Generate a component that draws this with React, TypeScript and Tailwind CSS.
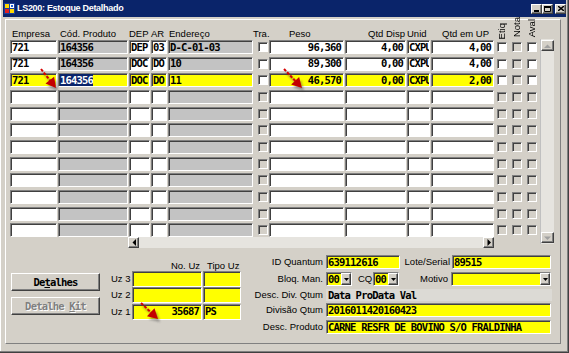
import React from 'react';

// classic win32 look: sunken edit fields, raised buttons
const MONO = "font-['DejaVu_Sans_Mono','Liberation_Mono',monospace] font-bold text-[10.5px] tracking-[-0.8px]";
const SUNKEN = 'border border-t-[#808080] border-l-[#808080] border-b-white border-r-white shadow-[inset_1px_1px_0_#404040]';
const RAISED = 'border border-t-white border-l-white border-b-[#404040] border-r-[#404040] shadow-[inset_-1px_-1px_0_#808080]';
const YELLOW = 'bg-[#ffff00]';
const GREY = 'bg-[#c3c3c3]';

type Row = {
    emp: string;
    cod: string;
    dep: string;
    ar: string;
    end: string;
    peso: string;
    disp: string;
    unid: string;
    up: string;
    yellow?: boolean;
    sel?: boolean;
};

const rows: (Row | null)[] = [
    { emp: '721', cod: '164356', dep: 'DEP', ar: '03', end: 'D-C-01-03', peso: '96,360', disp: '4,00', unid: 'CXPU', up: '4,00' },
    { emp: '721', cod: '164356', dep: 'DOC', ar: 'DO', end: '10', peso: '89,300', disp: '0,00', unid: 'CXPU', up: '4,00' },
    { emp: '721', cod: '164356', dep: 'DOC', ar: 'DO', end: '11', peso: '46,570', disp: '0,00', unid: 'CXPU', up: '2,00', yellow: true, sel: true },
    null, null, null, null, null, null, null, null, null,
];

function Cell({ className = '', right, children }: { className?: string; right?: boolean; children?: React.ReactNode }) {
    return (
        <div className={`${SUNKEN} ${MONO} h-full flex items-center overflow-hidden whitespace-nowrap leading-none ${right ? 'justify-end pr-[2px]' : 'pl-[1px]'} ${className}`}>
            {children}
        </div>
    );
}

function Check({ on }: { on?: boolean }) {
    return <div className={`w-[10px] h-[10px] ${SUNKEN} ${on ? 'bg-white' : 'bg-[#d4d0c8]'}`} />;
}

function GridRow({ r }: { r: Row | null }) {
    const w = r?.yellow ? YELLOW : 'bg-white';
    const g = r?.yellow ? YELLOW : GREY;
    return (
        <div className="flex h-[14px] shrink-0">
            <Cell className={`w-[47px] ${w}`}>{r?.emp}</Cell>
            <Cell className={`ml-[1px] w-[70px] ${g}`}>
                {r?.sel ? <span className="bg-[#0a246a] text-white py-[1px]">{r.cod}</span> : r?.cod}
            </Cell>
            <Cell className={`ml-[1px] w-[21px] ${w}`}>{r?.dep}</Cell>
            <Cell className={`ml-[1px] w-[16px] ${w}`}>{r?.ar}</Cell>
            <Cell className={`ml-[1px] w-[85px] ${g}`}>{r?.end}</Cell>
            <div className="w-[16px] flex items-center pl-[5px]"><Check on={!!r} /></div>
            <Cell right className={`w-[75px] ${w}`}>{r?.peso}</Cell>
            <Cell right className={`ml-[1px] w-[61px] ${w}`}>{r?.disp}</Cell>
            <Cell className={`ml-[1px] w-[23px] ${w}`}>{r?.unid}</Cell>
            <Cell right className={`ml-[1px] w-[63px] ${w}`}>{r?.up}</Cell>
            <div className="ml-[3px] flex items-center"><Check on={!!r} /></div>
            <div className="ml-[5px] flex items-center"><Check /></div>
            <div className="ml-[5px] flex items-center"><Check on={!!r} /></div>
        </div>
    );
}

function Header() {
    const lbl = 'text-[9.5px] leading-none pb-[2px] whitespace-nowrap';
    const vert = 'w-[10px] flex justify-center text-[9.5px] leading-none [writing-mode:vertical-rl] rotate-180';
    return (
        <div className="flex h-[20px] items-end">
            <div className={`w-[47px] pl-[2px] ${lbl}`}>Empresa</div>
            <div className={`ml-[1px] w-[70px] pl-[2px] ${lbl}`}>Cód. Produto</div>
            <div className={`ml-[1px] w-[21px] ${lbl}`}>DEP</div>
            <div className={`ml-[1px] w-[16px] ${lbl}`}>AR</div>
            <div className={`ml-[1px] w-[85px] pl-[1px] ${lbl}`}>Endereço</div>
            <div className={`w-[16px] ${lbl}`}>Tra.</div>
            <div className={`w-[75px] pl-[20px] ${lbl}`}>Peso</div>
            <div className={`ml-[1px] w-[61px] text-right pr-[1px] ${lbl}`}>Qtd Disp</div>
            <div className={`ml-[1px] w-[23px] ${lbl}`}>Unid</div>
            <div className={`ml-[1px] w-[63px] pl-[11px] ${lbl}`}>Qtd em UP</div>
            <div className="ml-[3px] pb-[1px]"><div className={vert}>Etiq</div></div>
            <div className="ml-[5px] pb-[3px]"><div className={vert}>Nota</div></div>
            <div className="ml-[5px] pb-[3px]"><div className={vert}>Aval</div></div>
        </div>
    );
}

function Tri({ dir, color = '#000' }: { dir: 'up' | 'down' | 'left' | 'right'; color?: string }) {
    const d = {
        up: 'M0 4h7L3.5 0.5z',
        down: 'M0 0.5h7L3.5 4z',
        left: 'M4 0v7L0.5 3.5z',
        right: 'M0.5 0v7L4 3.5z',
    }[dir];
    const vertical = dir === 'up' || dir === 'down';
    return (
        <svg width={vertical ? 7 : 4} height={vertical ? 4 : 7} viewBox={vertical ? '0 0 7 4' : '0 0 4 7'}>
            <path d={d} fill={color} />
        </svg>
    );
}

function Drop({ className = '', value }: { className?: string; value?: string }) {
    return (
        <div className={`${SUNKEN} ${YELLOW} h-full flex items-center ${className}`}>
            <span className={`${MONO} pl-[1px] flex-1 leading-none`}>{value}</span>
            <div className={`${RAISED} bg-[#d4d0c8] w-[10px] h-[12px] flex items-center justify-center`}>
                <svg width="5" height="3" viewBox="0 0 5 3"><path d="M0 0h5L2.5 3z" fill="#000" /></svg>
            </div>
        </div>
    );
}

function Arrow({ sx, sy, tx, ty }: { sx: number; sy: number; tx: number; ty: number }) {
    const dx = tx - sx;
    const dy = ty - sy;
    const len = Math.hypot(dx, dy);
    const ux = dx / len;
    const uy = dy / len;
    const bx = tx - ux * 10;
    const by = ty - uy * 10;
    const px = -uy * 5.5;
    const py = ux * 5.5;
    const pts = `${tx},${ty} ${bx + px},${by + py} ${bx - px},${by - py}`;
    return (
        <g>
            <g transform="translate(2,3)" opacity="0.45" filter="url(#shadowBlur)">
                <line x1={sx} y1={sy} x2={bx} y2={by} stroke="#444" strokeWidth="2" />
                <polygon points={pts} fill="#444" />
            </g>
            <line x1={sx} y1={sy} x2={bx + ux} y2={by + uy} stroke="#d60000" strokeWidth="2" strokeDasharray="3 1.5" />
            <polygon points={pts} fill="#c40000" />
        </g>
    );
}

function TitleBar() {
    const capBtn = `${RAISED} bg-[#d4d0c8] w-[11px] h-[10px] flex items-center justify-center`;
    return (
        <div className="h-[17px] shrink-0 bg-[#0a246a] flex items-center pl-[1px] pr-[0px]">
            <svg width="11" height="11" viewBox="0 0 11 11">
                <rect x="0" y="0" width="11" height="11" fill="#1c3f9c" />
                <rect x="1" y="1" width="4" height="4" fill="#ffd800" />
                <rect x="6" y="1" width="4" height="4" fill="#ffffff" />
                <rect x="1" y="6" width="4" height="4" fill="#e02020" />
                <rect x="6" y="6" width="4" height="4" fill="#ffd800" />
                <rect x="7" y="2" width="2" height="2" fill="#2060d0" />
            </svg>
            <span className="ml-[2px] text-white font-bold text-[9px] tracking-[-0.3px] leading-none">LS200: Estoque Detalhado</span>
            <div className="ml-auto flex items-center">
                <div className={capBtn}>
                    <svg width="5" height="2" viewBox="0 0 5 2" className="mt-[4px]"><rect width="5" height="2" fill="#000" /></svg>
                </div>
                <div className={capBtn}>
                    <svg width="7" height="6" viewBox="0 0 7 6"><path d="M0.5 0.5h6v5h-6z" fill="none" stroke="#000" /><rect x="0" y="0" width="7" height="2" fill="#000" /></svg>
                </div>
                <div className={`${capBtn} ml-[2px]`}>
                    <svg width="6" height="5" viewBox="0 0 6 5"><path d="M0 0l6 5M6 0L0 5" stroke="#000" strokeWidth="1.4" /></svg>
                </div>
            </div>
        </div>
    );
}

export default function App() {
    const label = 'text-[9.5px] leading-none whitespace-nowrap';
    return (
        <div className="relative w-[569px] h-[353px] overflow-hidden bg-[#d4d0c8] px-[3px] flex flex-col font-['Liberation_Sans',Arial,sans-serif] text-black shadow-[inset_-1px_-1px_0_#404040,inset_-2px_-2px_0_#808080,inset_1px_0_0_#ffffff]">
            <TitleBar />

            <div className="mt-[2px] ml-[2px] mr-[5px] h-[325px] shrink-0 border border-t-white border-l-white border-r-[#808080] border-b-[#808080] flex flex-col">
                <div className="flex">
                    <div className="ml-[4px] flex flex-col">
                        <Header />
                        <div className="flex flex-col gap-[2.67px]">
                            {rows.map((r, i) => <GridRow key={i} r={r} />)}
                        </div>
                        {/* horizontal scroll bar under the grid */}
                        <div className="ml-[118px] w-[366px] h-[11px] flex bg-[#e6e4df]">
                            <div className={`${RAISED} bg-[#d4d0c8] w-[11px] h-full flex items-center justify-center`}><Tri dir="left" /></div>
                            <div className="flex-1" />
                            <div className={`${RAISED} bg-[#d4d0c8] w-[11px] h-full flex items-center justify-center`}><Tri dir="right" /></div>
                        </div>
                    </div>
                    <div className="ml-[3px] mt-[19px] w-[14px] h-[205px] bg-[#e6e4df] border-l border-[#c0c0c0] flex flex-col justify-between py-[1px]">
                        <div className={`${RAISED} bg-[#d4d0c8] h-[11px] flex items-center justify-center`}><Tri dir="up" color="#a0a0a0" /></div>
                        <div className={`${RAISED} bg-[#d4d0c8] h-[11px] flex items-center justify-center`}><Tri dir="down" color="#a0a0a0" /></div>
                    </div>
                </div>

                <div className="flex items-start">
                    <div className="ml-[5px] mt-[25px] flex flex-col gap-[6px]">
                        <button className={`${RAISED} bg-[#d4d0c8] w-[89px] h-[18px] ${MONO} flex items-center justify-center leading-none`}>
                            De<span className="underline">t</span>alhes
                        </button>
                        <button disabled className={`${RAISED} bg-[#d4d0c8] w-[89px] h-[18px] ${MONO} text-[#808080] [text-shadow:1px_1px_0_#ffffff] flex items-center justify-center leading-none`}>
                            Detalhe&nbsp;<span className="underline">K</span>it
                        </button>
                    </div>

                    <div className="ml-[11px] mt-[10px] flex flex-col">
                        <div className={`flex h-[12px] items-end ${label}`}>
                            <div className="w-[21px]" />
                            <div className="w-[70px] text-right pr-[2px]">No. Uz</div>
                            <div className="ml-[1px] w-[38px] pl-[4px]">Tipo Uz</div>
                        </div>
                        {[['Uz 3', '', ''], ['Uz 2', '', ''], ['Uz 1', '35687', 'PS']].map(([l, n, t]) => (
                            <div key={l} className="flex items-center h-[16px] mt-[0.5px]">
                                <span className={`w-[17px] text-right ${label}`}>{l}</span>
                                <Cell right className={`ml-[4px] w-[70px] ${YELLOW}`}>{n}</Cell>
                                <Cell className={`ml-[1px] w-[38px] ${YELLOW}`}>{t}</Cell>
                            </div>
                        ))}
                    </div>

                    <div className="ml-[9px] mt-[7px] flex flex-col">
                        <div className="flex items-center h-[14px]">
                            <span className={`w-[73px] text-right ${label}`}>ID Quantum</span>
                            <Cell className={`ml-[3px] w-[74px] ${YELLOW}`}>639112616</Cell>
                            <span className={`w-[50px] text-right ${label}`}>Lote/Serial</span>
                            <Cell className={`ml-[2px] w-[99px] ${YELLOW}`}>89515</Cell>
                        </div>
                        <div className="flex items-center h-[14px] mt-[3px]">
                            <span className={`w-[73px] text-right ${label}`}>Bloq. Man.</span>
                            <Drop className="ml-[3px] w-[26px]" value="00" />
                            <span className={`ml-[6px] w-[12px] ${label}`}>CQ</span>
                            <Drop className="ml-[3px] w-[26px]" value="00" />
                            <span className={`w-[49px] text-right ${label}`}>Motivo</span>
                            <Drop className="ml-[3px] w-[100px]" />
                        </div>
                        <div className="flex items-center h-[12px] mt-[3px]">
                            <span className={`w-[73px] text-right ${label}`}>Desc. Div. Qtum</span>
                            <div className={`ml-[3px] w-[226px] h-full bg-[#dcdad5] flex items-center pl-[2px] ${MONO} leading-none`}>Data ProData Val</div>
                        </div>
                        <div className="flex items-center h-[14px] mt-[2px]">
                            <span className={`w-[73px] text-right ${label}`}>Divisão Qtum</span>
                            <Cell className={`ml-[3px] w-[225px] ${YELLOW}`}>2016011420160423</Cell>
                        </div>
                        <div className="flex items-center h-[14px] mt-[3px]">
                            <span className={`w-[73px] text-right ${label}`}>Desc. Produto</span>
                            <Cell className={`ml-[3px] w-[225px] ${YELLOW}`}>CARNE RESFR DE BOVINO S/O FRALDINHA</Cell>
                        </div>
                    </div>
                </div>
            </div>

            {/* red annotation arrows drawn over the form */}
            <svg className="absolute inset-0 pointer-events-none" width="569" height="353" viewBox="0 0 569 353">
                <defs>
                    <filter id="shadowBlur" x="-20%" y="-20%" width="140%" height="140%">
                        <feGaussianBlur stdDeviation="1" />
                    </filter>
                </defs>
                <Arrow sx={41} sy={69} tx={56} ty={88} />
                <Arrow sx={284} sy={69} tx={302} ty={88} />
                <Arrow sx={141} sy={303} tx={158} ty={319} />
            </svg>
        </div>
    );
}
